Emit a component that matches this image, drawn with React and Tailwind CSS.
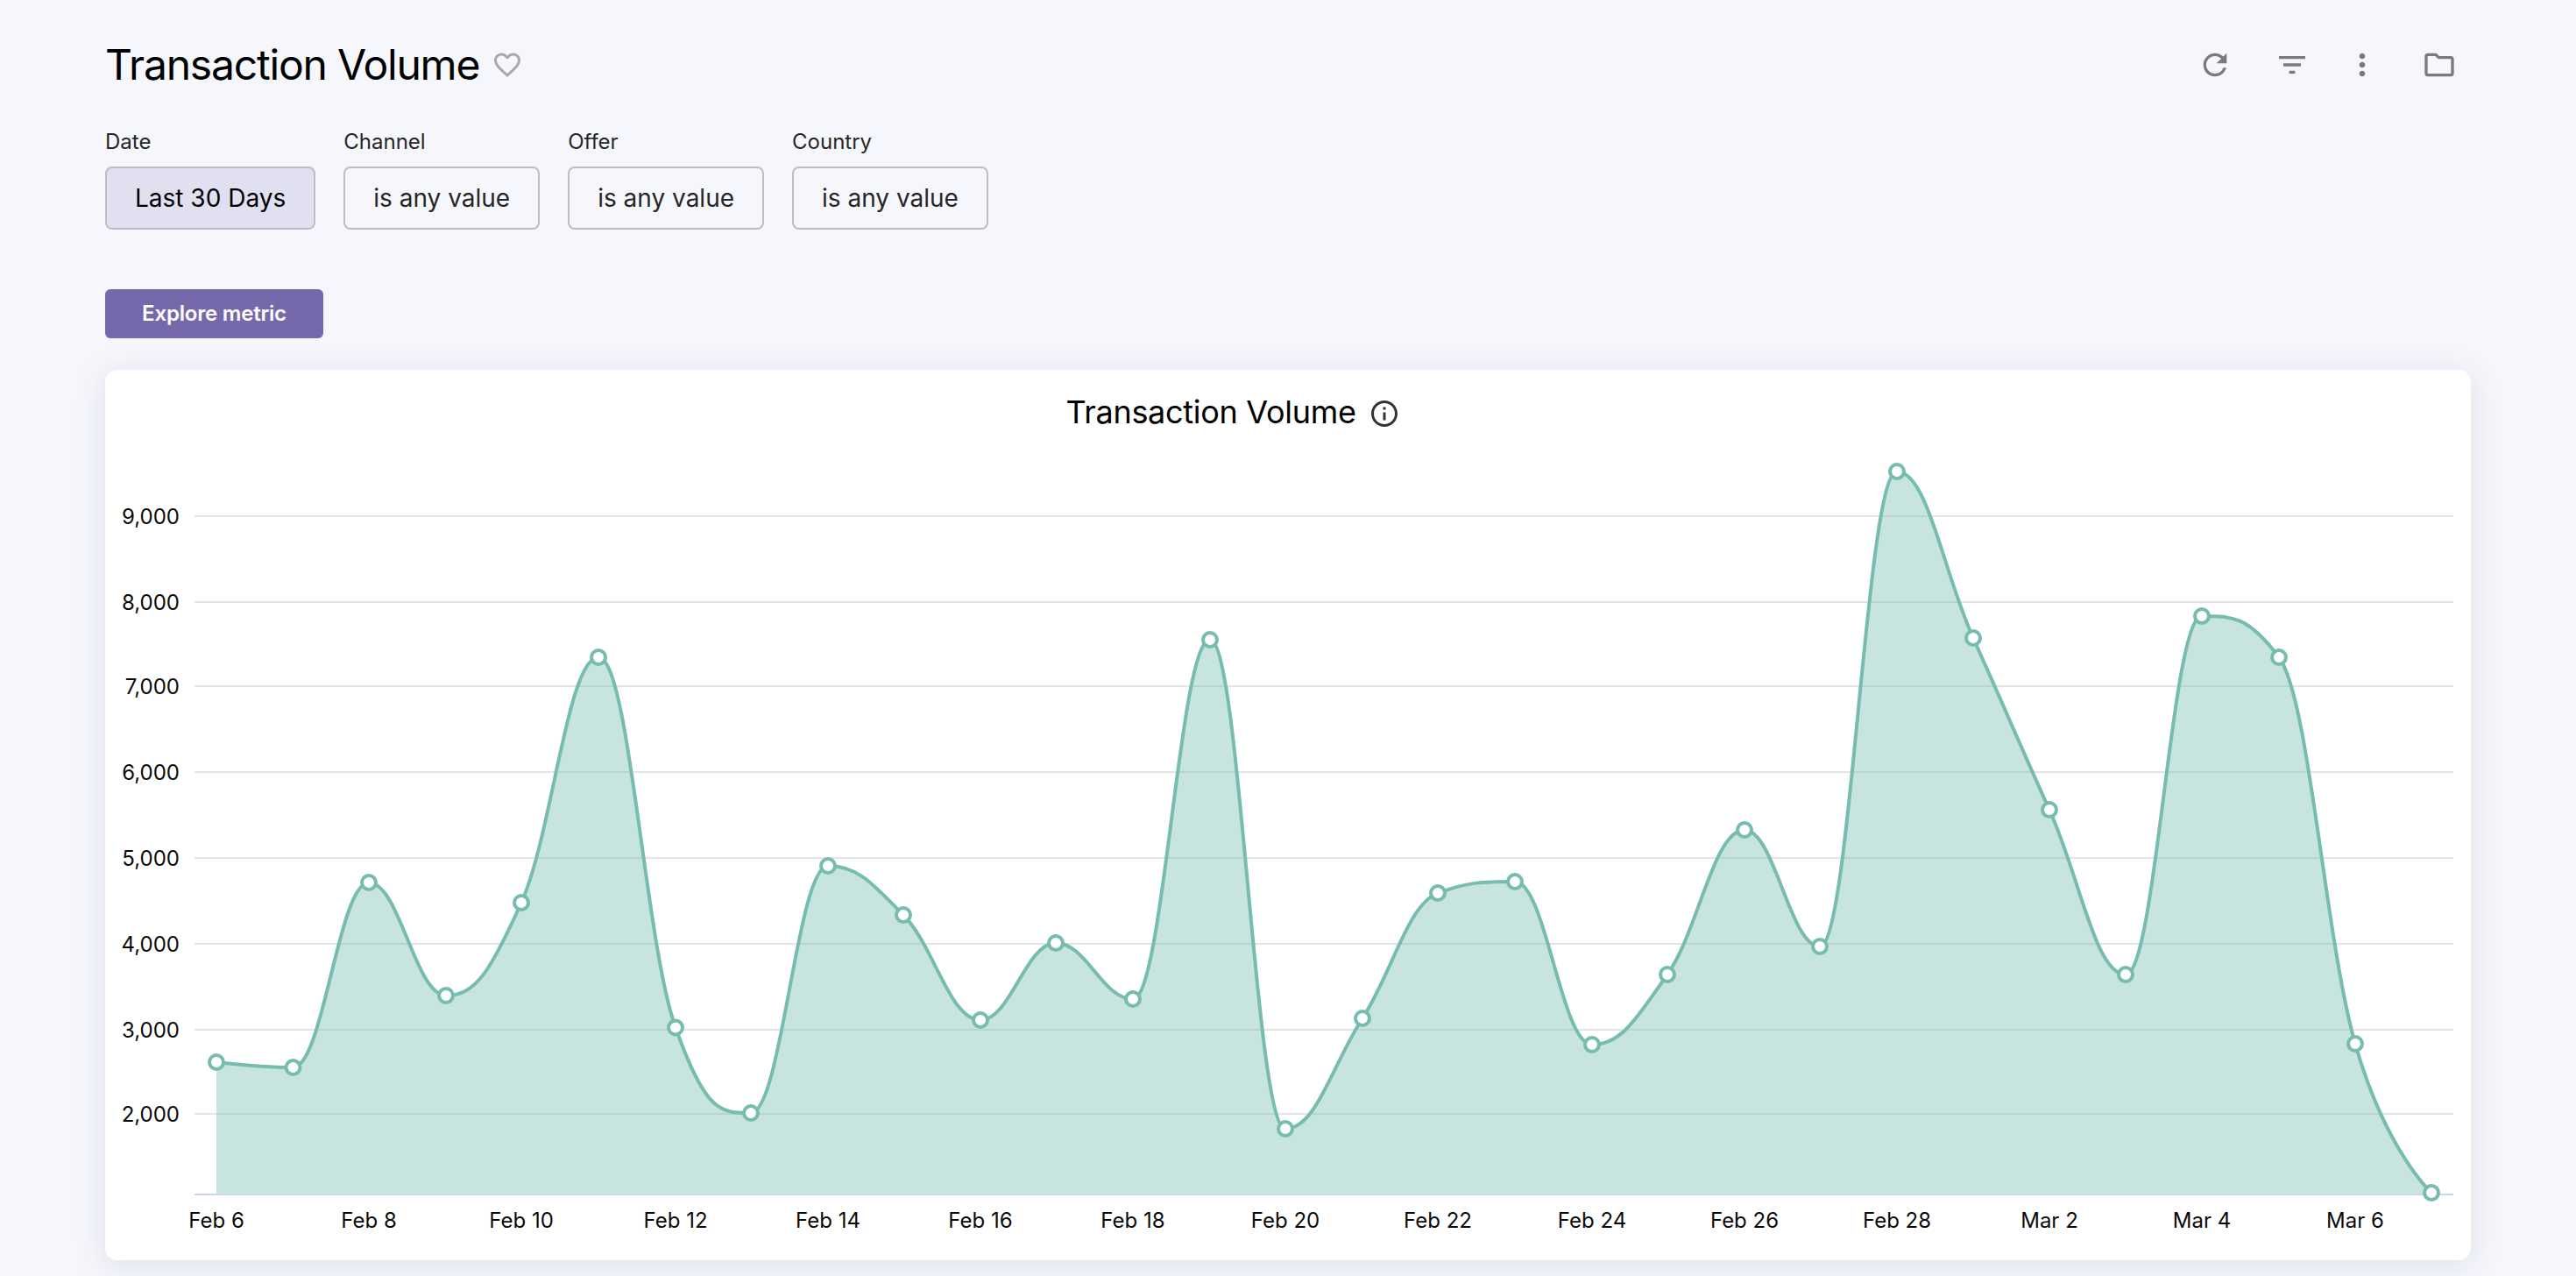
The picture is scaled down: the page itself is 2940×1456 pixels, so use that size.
import React from "react";
import { MdRefresh, MdFilterList, MdMoreVert, MdOutlineFolder, MdInfoOutline, MdFavoriteBorder } from "react-icons/md";

const FONT = "Inter, 'Liberation Sans', sans-serif";
const points = [
  [247, 1212], [334.5, 1218], [421, 1007], [509, 1136], [595, 1030], [683, 750], [771, 1172.5], [857, 1270],
  [945, 988], [1031, 1044], [1119, 1164], [1205, 1076], [1293, 1140], [1381, 730], [1467, 1288], [1555, 1162],
  [1641, 1019], [1729, 1006], [1817, 1192], [1903, 1112], [1991, 947], [2077, 1080], [2165, 538], [2252, 728],
  [2339, 924], [2426, 1112], [2513, 703], [2601, 750], [2688, 1191], [2775, 1361],
];
const yTicks = [
  ["9,000", 589], ["8,000", 687], ["7,000", 783], ["6,000", 881],
  ["5,000", 979], ["4,000", 1077], ["3,000", 1175], ["2,000", 1271],
];
const xTicks = [
  ["Feb 6", 0], ["Feb 8", 2], ["Feb 10", 4], ["Feb 12", 6], ["Feb 14", 8], ["Feb 16", 10], ["Feb 18", 12],
  ["Feb 20", 14], ["Feb 22", 16], ["Feb 24", 18], ["Feb 26", 20], ["Feb 28", 22], ["Mar 2", 24], ["Mar 4", 26], ["Mar 6", 28],
];
const OX = 120;
const OY = 518;

// same smoothing a highcharts spline series uses
function controls(i) {
  const [x, y] = points[i];
  const prev = points[i - 1];
  const next = points[i + 1];
  if (!prev || !next) return { l: [x, y], r: [x, y] };
  const s = 1.5;
  const d = s + 1;
  const lx = (s * x + prev[0]) / d;
  let ly = (s * y + prev[1]) / d;
  const rx = (s * x + next[0]) / d;
  let ry = (s * y + next[1]) / d;
  const c = ((ry - ly) * (rx - x)) / (rx - lx) + y - ry;
  ly += c;
  ry += c;
  if (ly > prev[1] && ly > y) {
    ly = Math.max(prev[1], y);
    ry = 2 * y - ly;
  } else if (ly < prev[1] && ly < y) {
    ly = Math.min(prev[1], y);
    ry = 2 * y - ly;
  }
  if (ry > next[1] && ry > y) {
    ry = Math.max(next[1], y);
    ly = 2 * y - ry;
  } else if (ry < next[1] && ry < y) {
    ry = Math.min(next[1], y);
    ly = 2 * y - ry;
  }
  return { l: [lx, ly], r: [rx, ry] };
}

function linePath() {
  let d = `M ${points[0][0] - OX} ${points[0][1] - OY}`;
  for (let i = 1; i < points.length; i++) {
    const a = controls(i - 1).r;
    const b = controls(i).l;
    const p = points[i];
    d += ` C ${a[0] - OX} ${a[1] - OY} ${b[0] - OX} ${b[1] - OY} ${p[0] - OX} ${p[1] - OY}`;
  }
  return d;
}

function Chart() {
  const line = linePath();
  const base = 1363 - OY;
  const area = `${line} L ${2775 - OX} ${base} L ${247 - OX} ${base} Z`;
  return (
    <svg viewBox="0 0 2700 920" className="block w-[2700px] h-[920px]" style={{ fontFamily: FONT }}>
      {yTicks.map(([label, y]) => (
        <g key={label}>
          <line x1={222 - OX} x2={2800 - OX} y1={y - OY} y2={y - OY} stroke="#e4e4e4" strokeWidth="2" />
          <text x={205 - OX} y={y - OY + 8.5} textAnchor="end" fontSize="24" fill="#0a0a0a">{label}</text>
        </g>
      ))}
      <path d={area} fill="#76bcaf" fillOpacity="0.4" />
      <line x1={222 - OX} x2={2800 - OX} y1={base} y2={base} stroke="#ccd6eb" strokeWidth="2" />
      <path d={line} fill="none" stroke="#76bcaf" strokeWidth="4" />
      {points.map(([x, y]) => (
        <circle key={x} cx={x - OX} cy={y - OY} r="8" fill="#fff" stroke="#76bcaf" strokeWidth="4" />
      ))}
      {xTicks.map(([label, i]) => (
        <text key={label} x={points[i][0] - OX} y={1401 - OY} textAnchor="middle" fontSize="24" fill="#0a0a0a">{label}</text>
      ))}
    </svg>
  );
}

function Filter({ label, value, active }) {
  return (
    <div className="flex flex-col">
      <span className="text-[24px] leading-[30px] text-[#262626] mb-[13px]">{label}</span>
      <button
        className={`h-[72px] border-2 border-[#bdbdc3] rounded-[8px] text-[28px] text-[#262626] px-[32px] ${active ? "bg-[#e1e0f0] text-black" : ""}`}
      >
        {value}
      </button>
    </div>
  );
}

export default function App() {
  return (
    <div className="h-[1456px] overflow-hidden bg-[#f6f7fc] px-[120px]" style={{ fontFamily: FONT }}>
      <div className="flex items-center justify-between h-[147px]">
        <div className="flex items-center gap-[14px]">
          <h1 className="text-[48px] tracking-[-1.2px] text-black">Transaction Volume</h1>
          <MdFavoriteBorder size={36} className="text-[#a9a9ad]" />
        </div>
        <div className="flex items-center text-[#7a7a7e] mr-[16px]">
          <MdRefresh size={40} />
          <MdFilterList size={40} className="ml-[48px]" />
          <MdMoreVert size={40} className="ml-[40px]" />
          <MdOutlineFolder size={40} className="ml-[48px]" />
        </div>
      </div>
      <div className="flex gap-[32px]">
        <Filter label="Date" value="Last 30 Days" active />
        <Filter label="Channel" value="is any value" />
        <Filter label="Offer" value="is any value" />
        <Filter label="Country" value="is any value" />
      </div>
      <button className="block mt-[68px] h-[56px] w-[249px] rounded-[6px] bg-[#7569ac] text-white text-[24px] font-semibold tracking-[-0.2px]">
        Explore metric
      </button>
      <div className="mt-[36px] h-[1016px] bg-white rounded-[14px] shadow-[0_6px_36px_rgba(70,80,130,0.14)]">
        <div className="flex items-center justify-center gap-[14px] h-[96px] pr-[126px]">
          <span className="text-[36px] tracking-[-0.3px] text-black">Transaction Volume</span>
          <MdInfoOutline size={36} className="text-[#333] mt-[4px]" />
        </div>
        <Chart />
      </div>
    </div>
  );
}
